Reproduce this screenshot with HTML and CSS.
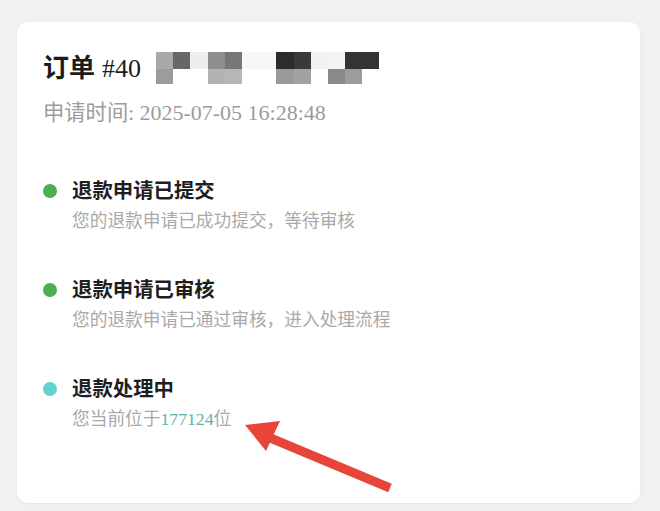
FILE: index.html
```html
<!DOCTYPE html>
<html lang="zh-CN">
<head>
<meta charset="utf-8">
<title>订单详情</title>
<link rel="stylesheet" href="styles.css">
</head>
<body>
<div class="page">
  <div class="card">
    <div class="order-title">
      <span class="order-label">订单</span>
      <span class="order-no">#40</span>
      <div class="mosaic">
        <i class="m1"></i><i class="m2"></i><i class="m3"></i><i class="m4"></i><i class="m5"></i><i class="m6"></i><i class="m6"></i><i class="m8"></i><i class="m9"></i><i class="m10"></i><i class="m11"></i><i class="m12"></i><i class="m12"></i>
        <i class="b1"></i><i class="w"></i><i class="w"></i><i class="b4"></i><i class="b5"></i><i class="w"></i><i class="w"></i><i class="b8"></i><i class="b9"></i><i class="w"></i><i class="b11"></i><i class="b12"></i><i class="w"></i>
      </div>
    </div>
    <div class="apply-time">申请时间: <span class="apply-date">2025-07-05 16:28:48</span></div>

    <ul class="timeline">
      <li class="step">
        <div class="step-head"><span class="dot done"></span><span class="step-title">退款申请已提交</span></div>
        <div class="step-desc">您的退款申请已成功提交，等待审核</div>
      </li>
      <li class="step">
        <div class="step-head"><span class="dot done"></span><span class="step-title">退款申请已审核</span></div>
        <div class="step-desc">您的退款申请已通过审核，进入处理流程</div>
      </li>
      <li class="step">
        <div class="step-head"><span class="dot active"></span><span class="step-title">退款处理中</span></div>
        <div class="step-desc">您当前位于<span class="queue-no">177124</span>位</div>
      </li>
    </ul>
  </div>

  <svg class="annotation" width="660" height="511" viewBox="0 0 660 511" aria-hidden="true">
    <line x1="268" y1="437" x2="390" y2="488" stroke="#e8453a" stroke-width="9"/>
    <polygon points="245,425 280,421 266,451" fill="#e8453a"/>
  </svg>
</div>
</body>
</html>
```

FILE: styles.css
```css
html, body {
  margin: 0;
  padding: 0;
}

body {
  background: #f0f1f3;
  font-family: "Liberation Serif", "Noto Sans CJK SC", serif;
  width: 660px;
  height: 511px;
  overflow: hidden;
}

.page {
  position: relative;
  padding: 22px 20px 0 17px;
  height: 511px;
  box-sizing: border-box;
}

.card {
  background: #ffffff;
  border-radius: 11px;
  height: 481px;
  box-sizing: border-box;
  padding: 30px 26px 0 26px;
  box-shadow: 0 1px 3px rgba(0, 0, 0, 0.05);
}

.order-title {
  display: flex;
  align-items: center;
  height: 34px;
  font-size: 26px;
  line-height: 34px;
  color: #1c1c1c;
}

.order-label {
  font-weight: 700;
}

.order-no {
  margin-left: 7px;
  font-weight: 400;
}

.mosaic {
  display: grid;
  grid-template-columns: repeat(13, 17.2px);
  grid-template-rows: 17px 15px;
  margin-left: 15px;
  margin-top: -2px;
}

.mosaic i { display: block; }
.mosaic .m1 { background: #a9a9a9; }
.mosaic .m2 { background: #676767; }
.mosaic .m3 { background: #eeeeee; }
.mosaic .m4 { background: #8e8e8e; }
.mosaic .m5 { background: #777777; }
.mosaic .m6 { background: #f7f7f7; }
.mosaic .m8 { background: #2c2c2c; }
.mosaic .m9 { background: #3a3a3a; }
.mosaic .m10 { background: #f2f2f2; }
.mosaic .m11 { background: #f5f5f5; }
.mosaic .m12 { background: #333333; }
.mosaic .w { background: #ffffff; }
.mosaic .b1 { background: #9c9c9c; }
.mosaic .b4 { background: #b2b2b2; }
.mosaic .b5 { background: #b6b6b6; }
.mosaic .b8 { background: #9a9a9a; }
.mosaic .b9 { background: #a2a2a2; }
.mosaic .b11 { background: #8a8a8a; }
.mosaic .b12 { background: #9c9c9c; }

.apply-time {
  margin-top: 13px;
  font-size: 21.3px;
  line-height: 28px;
  color: #9c9c9c;
}

.apply-date {
  font-size: 22px;
}

.timeline {
  list-style: none;
  margin: 50px 0 0 0;
  padding: 0;
  display: flex;
  flex-direction: column;
  gap: 42px;
}

.step-head {
  display: flex;
  align-items: center;
  height: 28px;
}

.dot {
  width: 14px;
  height: 14px;
  border-radius: 50%;
  flex: none;
}

.dot.done { background: #4dae4f; }
.dot.active { background: #64d3cf; }

.step-title {
  margin-left: 15px;
  font-size: 20.4px;
  line-height: 28px;
  font-weight: 700;
  color: #1e1e1e;
}

.step-desc {
  margin-top: 3px;
  margin-left: 29px;
  font-size: 17.7px;
  line-height: 26px;
  color: #a9a9a9;
}

.queue-no {
  color: #5cb3ae;
}

.annotation {
  position: absolute;
  left: 0;
  top: 0;
  pointer-events: none;
}
```
